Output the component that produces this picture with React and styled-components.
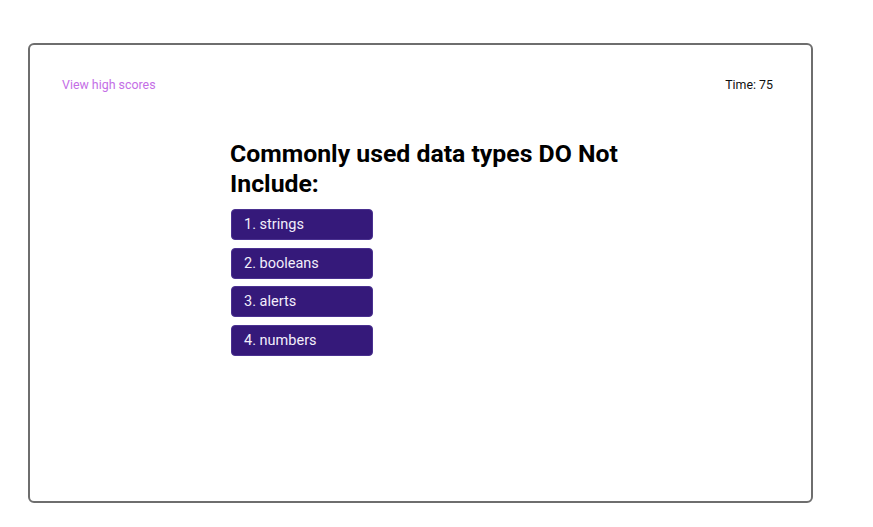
import styled, { createGlobalStyle } from "styled-components";

const GlobalStyle = createGlobalStyle`
  html, body {
    margin: 0;
    padding: 0;
    background: #ffffff;
    font-family: Roboto, "Liberation Sans", sans-serif;
  }
`;

const choices = ["strings", "booleans", "alerts", "numbers"];

const App = () => {
  return (
    <>
      <GlobalStyle />
      <Frame>
        <Header>
          <HighScores href="#">View high scores</HighScores>
          <Timer>Time: 75</Timer>
        </Header>
        <Quiz>
          <Question>Commonly used data types DO Not Include:</Question>
          <Choices>
            {choices.map((c, i) => (
              <Choice key={c}>
                {i + 1}. {c}
              </Choice>
            ))}
          </Choices>
        </Quiz>
      </Frame>
    </>
  );
};

const Frame = styled.div`
  box-sizing: border-box;
  margin: 43px 0 0 28px;
  width: 785px;
  height: 460px;
  border: 2px solid #6e6e6e;
  border-radius: 6px;
`;

const Header = styled.div`
  display: flex;
  justify-content: space-between;
  align-items: center;
  padding: 33px 38px 0 32px;
  font-size: 12.4px;
  line-height: 14px;
`;

const HighScores = styled.a`
  color: #c46ee6;
  text-decoration: none;
`;

const Timer = styled.span`
  color: #111111;
`;

const Quiz = styled.div`
  margin: 47px 0 0 200px;
  width: 430px;
`;

const Question = styled.h1`
  margin: 0 0 11px 0;
  font-size: 24.8px;
  line-height: 29.5px;
  font-weight: 700;
  color: #000000;
`;

const Choices = styled.div`
  display: flex;
  flex-direction: column;
  align-items: flex-start;
  gap: 7.5px;
  padding-left: 1px;
`;

const Choice = styled.button`
  box-sizing: border-box;
  width: 142px;
  height: 31px;
  padding: 0 0 0 12px;
  text-align: left;
  border: 1px solid #4a3190;
  border-radius: 4px;
  background: #35197a;
  color: #f2eefa;
  font-family: Roboto, "Liberation Sans", sans-serif;
  font-size: 14.5px;
  cursor: pointer;
`;

export default App;
